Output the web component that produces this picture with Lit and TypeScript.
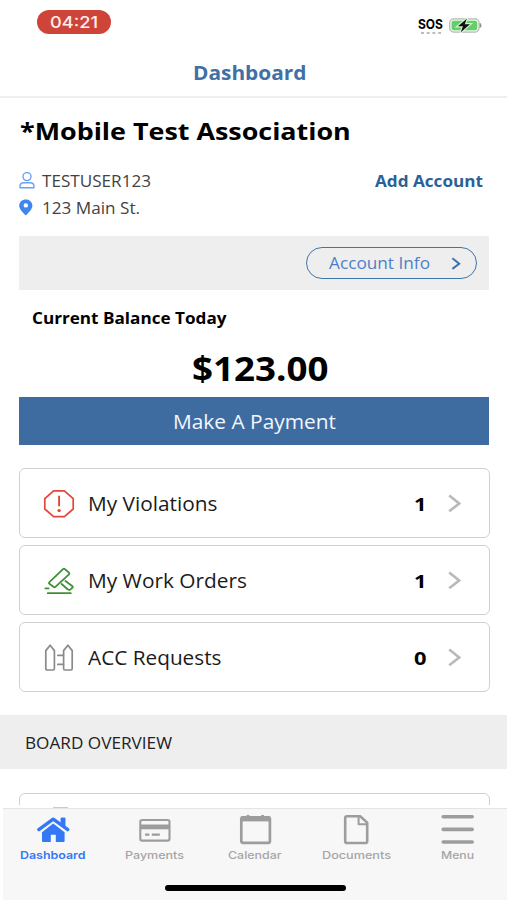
import { LitElement, html, css, svg } from "lit";
import { customElement } from "lit/decorators.js";

/** A line of text stretched to a fixed width, with its baseline at a fixed height. */
const label = (text: string, cls: string, width: number, height: number, base: number) => html`
  <svg class="label ${cls}" width=${width} height=${height}>
    <text x="0" y=${base} textLength=${width} lengthAdjust="spacingAndGlyphs">${text}</text>
  </svg>`;

const violationIcon = html`<svg class="icon" width="32" height="30" viewBox="0 0 32 30">
  <g fill="none" stroke="#e2453b" stroke-width="1.7" stroke-linejoin="round" stroke-linecap="round">
    <path d="M10.6 1.8H21.4L30.2 9.6V20L21.4 27.6H10.6L1.8 20V9.6Z" />
    <path d="M16.1 7.4V16.6" stroke-width="1.9" />
  </g>
  <circle cx="16.1" cy="21.6" r="1.7" fill="#e2453b" />
</svg>`;

const gavelIcon = html`<svg class="icon" width="32" height="30" viewBox="0 0 32 30">
  <g fill="none" stroke="#3f9136" stroke-width="1.8" stroke-linejoin="round" stroke-linecap="round">
    <path d="M6.4 16.2L20 3.2Q21 2.3 22 3.2L26 6.6Q26.9 7.5 26 8.4L12.4 20.8Q11.4 21.7 10.4 20.8L6.4 17.8Q5.5 17 6.4 16.2Z" />
    <path d="M18.6 18L24.6 23.2Q26 24.3 27.4 23.4L29.4 21.8Q30.3 20.8 29.2 19.9L22.4 15" />
    <path d="M2.4 22.4H5.6M4.8 27.2H27.8" />
  </g>
</svg>`;

const fenceIcon = html`<svg class="icon" width="32" height="30" viewBox="0 0 32 30">
  <g fill="none" stroke="#8a8a8a" stroke-width="1.7" stroke-linejoin="round" stroke-linecap="round">
    <path d="M2.8 7.6L7.1 2.2L11.4 7.6V25.6Q11.4 27 10 27H4.2Q2.8 27 2.8 25.6Z" />
    <path d="M20.6 7.6L24.9 2.2L29.2 7.6V25.6Q29.2 27 27.8 27H22Q20.6 27 20.6 25.6Z" />
    <path d="M14.8 12.4H20.4M14.8 21.4H20.4" />
  </g>
</svg>`;

const rows = [
  { icon: violationIcon, name: "My Violations", width: 129.5, count: "1" },
  { icon: gavelIcon, name: "My Work Orders", width: 159, count: "1" },
  { icon: fenceIcon, name: "ACC Requests", width: 133.5, count: "0" },
];

const houseIcon = svg`<g fill="#3478f6">
  <path d="M17.2 10.4L28.6 19.2V28Q28.6 29 27.6 29H19.8V21.8H14.8V29H7Q6 29 6 28V19.2Z" />
  <path d="M2.6 16.4L17.2 6.2L32 16.4" fill="none" stroke="#f7f7f7" stroke-width="5.4" />
  <path d="M25 5H29V13.6L25 10.8Z" stroke="#3478f6" stroke-width="0.9" stroke-linejoin="round" />
  <path d="M2.8 16.6L17.2 6.2L31.8 16.6" fill="none" stroke="#3478f6" stroke-width="3.4" stroke-linecap="round" stroke-linejoin="round" />
</g>`;
const cardIcon = svg`<g fill="none" stroke="#9d9d9d">
  <rect x="3.3" y="7" width="29.2" height="20.6" rx="1.8" stroke-width="2.1" />
  <path d="M3 13.9H33" stroke-width="4.8" />
  <path d="M8 21.6H12.4M14.8 21.6H22.8" stroke-width="2.4" />
</g>`;
const calendarIcon = svg`<g fill="none" stroke="#9d9d9d">
  <rect x="3.3" y="4.4" width="28.6" height="25.4" rx="1.6" stroke-width="2.7" />
  <path d="M3 5.9H32.2" stroke-width="5" />
  <path d="M10 3.7V4.2M24.6 3.7V4.2" stroke-width="3.8" stroke-linecap="round" />
</g>`;
const documentIcon = svg`<g fill="none" stroke="#9d9d9d" stroke-width="2.6" stroke-linejoin="round">
  <path d="M8 3.3H21.2L28.2 9.6V28.2Q28.2 30 26.4 30H8Q6.2 30 6.2 28.2V5.1Q6.2 3.3 8 3.3Z" />
  <path d="M19.6 3.6V11.2H28" stroke-width="2" />
</g>`;
const menuIcon = svg`<path d="M3.2 3.8H32.2M3.2 16.4H32.2M3.2 29H32.2" stroke="#9d9d9d" stroke-width="3.6" stroke-linecap="round" />`;

const tabs = [
  { name: "Dashboard", icon: houseIcon, width: 65.5, active: true },
  { name: "Payments", icon: cardIcon, width: 59, active: false },
  { name: "Calendar", icon: calendarIcon, width: 53.5, active: false },
  { name: "Documents", icon: documentIcon, width: 69, active: false },
  { name: "Menu", icon: menuIcon, width: 33, active: false },
];

@customElement("app-root")
export class AppRoot extends LitElement {
  static styles = css`
    :host { display: flex; flex-direction: column; width: 507px; height: 900px; overflow: hidden; background: #fff; color: #000; font-family: "Open Sans", sans-serif; }
    * { box-sizing: border-box; }
    svg { display: block; flex: none; }
    .label { overflow: visible; fill: currentColor; }
    .header { height: 98px; flex: none; border-bottom: 2px solid #efefef; }
    .status { display: flex; justify-content: space-between; height: 60px; padding: 10px 25px 0 37px; }
    .clock { display: flex; justify-content: center; width: 74px; height: 24px; padding-right: 1px; border-radius: 12px; background: #cf4439; color: #fff0ec; }
    .signals { display: flex; gap: 6px; padding-top: 8px; }
    .time { font: 500 16.4px "Inter", sans-serif; }
    .sos { font: 700 13.5px "Inter", sans-serif; }
    .title { display: flex; justify-content: center; padding-right: 7.5px; color: #426fa5; }
    .f-title { font-size: 19.5px; font-weight: 700; }
    .f-head { font-size: 24px; font-weight: 700; }
    .f-16 { font-size: 16.2px; }
    .f-16b { font-size: 16px; font-weight: 700; }
    .f-19 { font-size: 19.2px; }
    .f-19b { font-size: 18.6px; font-weight: 700; }
    .f-amount { font-size: 33.5px; font-weight: 700; }
    .content { height: 707px; flex: none; overflow: hidden; }
    .assoc { padding: 14px 0 0 19.5px; height: 70px; }
    .people { display: flex; justify-content: space-between; height: 67px; padding: 0 24px 0 19px; }
    .lines { display: flex; flex-direction: column; }
    .line { display: flex; align-items: center; gap: 7px; height: 26.5px; color: #424242; }
    .add { padding-top: 1px; color: #2a6196; }
    .band { display: flex; justify-content: flex-end; align-items: center; height: 54px; margin: 0.5px 18px 0 19px; padding-right: 12px; background: #eee; }
    .info { display: flex; align-items: center; justify-content: space-between; width: 171px; height: 32px; padding: 0 15.5px 0 21.5px; border: 1px solid #3f75aa; border-radius: 16px; color: #4c80c9; }
    .today { padding: 14.5px 0 0 31.5px; height: 55px; }
    .amount { display: flex; justify-content: center; height: 52.5px; padding-left: 13px; }
    .pay { display: flex; justify-content: center; align-items: center; height: 48px; margin: 0 18px 0 19px; background: #3f6ca0; color: #f1f6ff; }
    .list { display: flex; flex-direction: column; gap: 7px; padding: 23px 17.5px 23px 19px; }
    .row { display: flex; align-items: center; height: 70px; padding: 0 27.5px 0 23px; border: 1px solid #d0d0d0; border-radius: 6px; color: #1b1b1b; }
    .row .icon { margin: 1px 12.5px 0 0; }
    .count { margin-left: auto; width: 12px; margin-right: 22px; color: #000; }
    .board { display: flex; align-items: center; height: 54px; padding-left: 25px; background: #eee; color: #222; }
    .next { height: 70px; margin: 23.5px 17.5px 0 19px; border: 1px solid #d0d0d0; border-radius: 6px; }
    .peek { display: flex; height: 3px; padding-left: 53px; flex: none; align-items: flex-end; }
    .peek i { display: block; width: 15px; height: 1px; background: #cacaca; }
    .bar { flex: 1; margin-left: 3px; border-top: 1px solid #e4e4e4; background: #f7f7f7; }
    .tabs { display: flex; height: 76px; margin-right: -1px; }
    .tab { display: flex; flex-direction: column; align-items: center; width: 101.2px; padding: 4px 1px 0 0; color: #a5a5a5; font: 500 10.9px "Inter", sans-serif; }
    .glyph { margin-left: 2px; }
    .tab.active { color: #3478f6; font-weight: 600; }
    .home { width: 181px; height: 6px; margin-left: 162px; border-radius: 3px; background: #000; }
  `;

  render() {
    return html`
      <header class="header">
        <div class="status">
          <div class="clock">${label("04:21", "time", 48, 24, 17.7)}</div>
          <div class="signals">
            <svg class="label sos" width="25" height="18">
              <text x="0" y="11.4" textLength="25" lengthAdjust="spacingAndGlyphs">SOS</text>
              <path d="M3 15H24" stroke="#bdbdbd" stroke-width="2.2" stroke-dasharray="3 2.7" />
            </svg>
            <svg width="33" height="15" viewBox="0 0 33 15">
              <rect x="0.7" y="0.9" width="29.4" height="13.2" rx="4" fill="#eef6ec" stroke="#b5b9b3" stroke-width="1.2" />
              <rect x="2.6" y="2.7" width="25.6" height="9.6" rx="2.4" fill="#62cf67" />
              <path d="M31.2 5.4Q33 7.5 31.2 9.4Z" fill="#8f8f8f" stroke="#8f8f8f" />
              <path d="M17.8 0.8L8.9 8.2H13.9L11.8 14.2L21 6.3H15.8Z" fill="#111" stroke="#d3f3d2" stroke-width="2.4" paint-order="stroke" />
            </svg>
          </div>
        </div>
        <div class="title">${label("Dashboard", "f-title", 113.5, 28, 20.4)}</div>
      </header>
      <main class="content">
        <div class="assoc">${label("*Mobile Test Association", "f-head", 330.8, 40, 27.8)}</div>
        <div class="people">
          <div class="lines">
            <div class="line">
              <svg width="16" height="18" viewBox="0 0 16 18">
                <g fill="none" stroke="#6ba0f2" stroke-width="1.4">
                  <circle cx="8" cy="4.6" r="4" />
                  <path d="M1 15.8V14.2Q1.2 10.8 4.8 10.8H11.2Q14.8 10.8 15 14.2V15.8Z" stroke-linejoin="round" />
                </g>
              </svg>
              ${label("TESTUSER123", "f-16", 109, 26, 19)}
            </div>
            <div class="line">
              <svg width="16" height="18" viewBox="0 0 16 18">
                <path fill-rule="evenodd" fill="#3f86ee" d="M6.8 0.6C10.6 0.6 13.4 3.3 13.4 6.8C13.4 10 10 13 7.9 15.6Q6.8 16.8 5.7 15.6C3.6 13 0.2 10 0.2 6.8C0.2 3.3 3 0.6 6.8 0.6ZM6.8 4.2A2.2 2.2 0 1 0 6.8 8.6A2.2 2.2 0 1 0 6.8 4.2Z" />
              </svg>
              ${label("123 Main St.", "f-16", 98, 26, 18.5)}
            </div>
          </div>
          <div class="add">${label("Add Account", "f-16b", 108, 26, 17.5)}</div>
        </div>
        <div class="band">
          <div class="info">
            ${label("Account Info", "f-16", 101, 26, 19)}
            <svg width="10" height="14" viewBox="0 0 10 14"><path d="M1.4 2.3L8.2 7.7L1.4 12.9" fill="none" stroke="#3f72a6" stroke-width="2" /></svg>
          </div>
        </div>
        <div class="today">${label("Current Balance Today", "f-16b", 194.5, 26, 20)}</div>
        <div class="amount">${label("$123.00", "f-amount", 136.5, 50, 36.4)}</div>
        <div class="pay">${label("Make A Payment", "f-19", 163, 30, 23)}</div>
        <div class="list">
          ${rows.map((r) => html`
            <div class="row">
              ${r.icon}${label(r.name, "f-19", r.width, 30, 22.5)}
              <div class="count">${label(r.count, "f-19b", 12.5, 30, 22.8)}</div>
              <svg width="13" height="20" viewBox="0 0 13 20"><path d="M1.2 2.4L11.2 10.5L1.2 18.3" fill="none" stroke="#b9b9b9" stroke-width="2.6" /></svg>
            </div>`)}
        </div>
        <div class="board">${label("BOARD OVERVIEW", "f-16", 147, 26, 19.8)}</div>
        <div class="next"></div>
      </main>
      <div class="peek"><i></i></div>
      <footer class="bar">
        <nav class="tabs">
          ${tabs.map((t) => html`
            <div class="tab ${t.active ? "active" : ""}">
              <svg class="glyph" width="36" height="33" viewBox="0 0 36 33">${t.icon}</svg>
              ${label(t.name, "", t.width, 14, 12.8)}
            </div>`)}
        </nav>
        <div class="home"></div>
      </footer>`;
  }
}
